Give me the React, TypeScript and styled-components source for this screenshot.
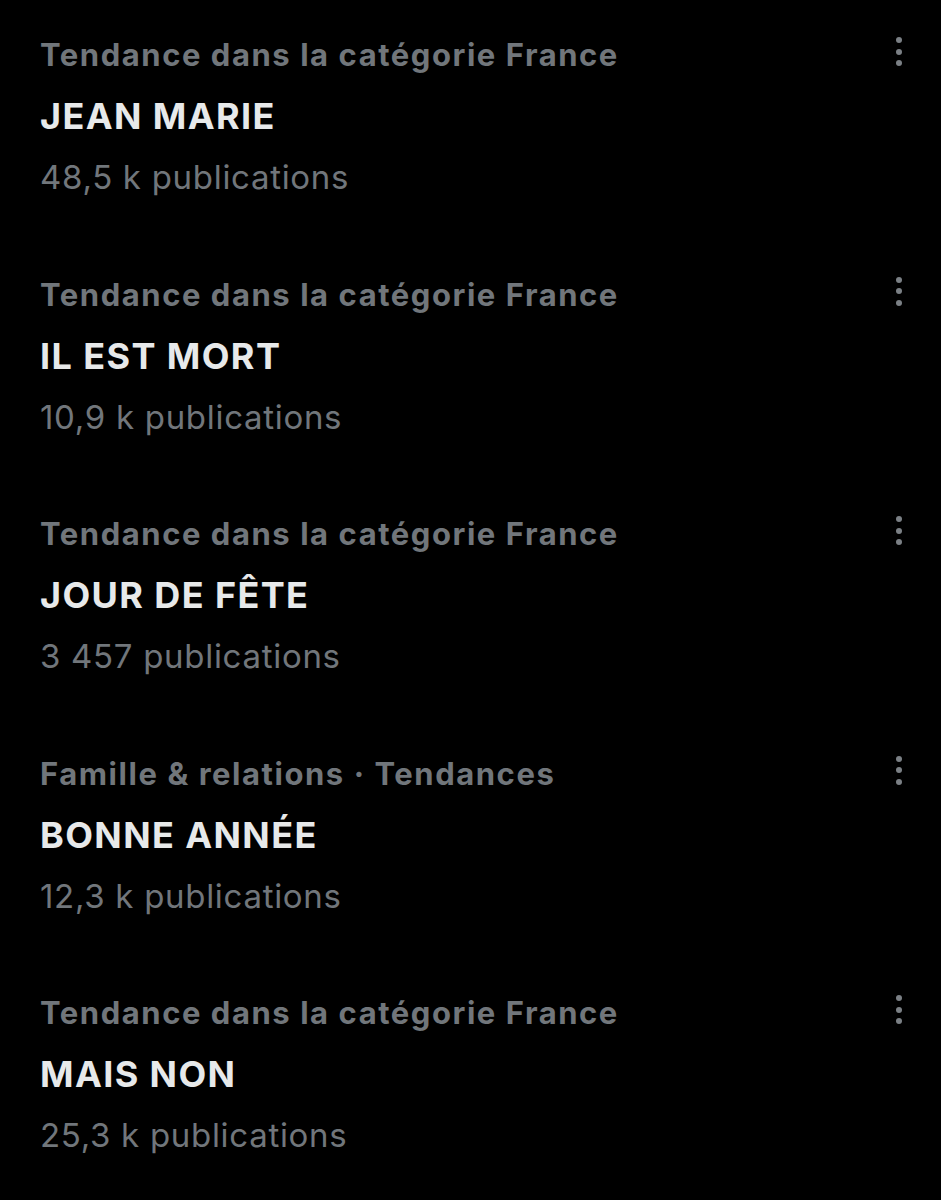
import React from 'react';
import styled, { createGlobalStyle } from 'styled-components';

const GlobalStyle = createGlobalStyle`
  html, body {
    margin: 0;
    padding: 0;
    background: #000000;
  }
  body {
    font-family: Inter, "Open Sans", sans-serif;
    -webkit-font-smoothing: antialiased;
  }
`;

const List = styled.div`
  display: flex;
  flex-direction: column;
  width: 941px;
  padding-top: 34px;
`;

const Trend = styled.div`
  display: flex;
  justify-content: space-between;
  align-items: flex-start;
  height: 239.5px;
  padding: 0 33px 0 40px;
  box-sizing: border-box;
`;

const Texts = styled.div`
  display: flex;
  flex-direction: column;
`;

const Category = styled.div`
  color: #71767b;
  font-size: 31px;
  font-weight: 700;
  line-height: 42px;
  letter-spacing: 1.55px;
`;

const Title = styled.div`
  color: #e7e9ea;
  font-size: 36px;
  font-weight: 700;
  line-height: 48px;
  margin-top: 16px;
  letter-spacing: 1.4px;
`;

const Count = styled.div`
  color: #71767b;
  font-size: 33px;
  font-weight: 400;
  line-height: 44px;
  margin-top: 15px;
  letter-spacing: 0.7px;
`;

const More = styled.div`
  display: flex;
  flex-direction: column;
  align-items: center;
  gap: 5.5px;
  padding-top: 3px;
  width: 18px;
`;

const Dot = styled.span`
  width: 6px;
  height: 6px;
  border-radius: 50%;
  background: #7b8085;
`;

const trends = [
  { category: 'Tendance dans la catégorie France', title: 'JEAN MARIE', count: '48,5 k publications' },
  { category: 'Tendance dans la catégorie France', title: 'IL EST MORT', count: '10,9 k publications' },
  { category: 'Tendance dans la catégorie France', title: 'JOUR DE FÊTE', count: '3 457 publications' },
  { category: 'Famille & relations · Tendances', title: 'BONNE ANNÉE', count: '12,3 k publications' },
  { category: 'Tendance dans la catégorie France', title: 'MAIS NON', count: '25,3 k publications' },
];

const App: React.FC = () => (
  <>
    <GlobalStyle />
    <List>
      {trends.map((t) => (
        <Trend key={t.title}>
          <Texts>
            <Category>{t.category}</Category>
            <Title>{t.title}</Title>
            <Count>{t.count}</Count>
          </Texts>
          <More>
            <Dot />
            <Dot />
            <Dot />
          </More>
        </Trend>
      ))}
    </List>
  </>
);

export default App;
